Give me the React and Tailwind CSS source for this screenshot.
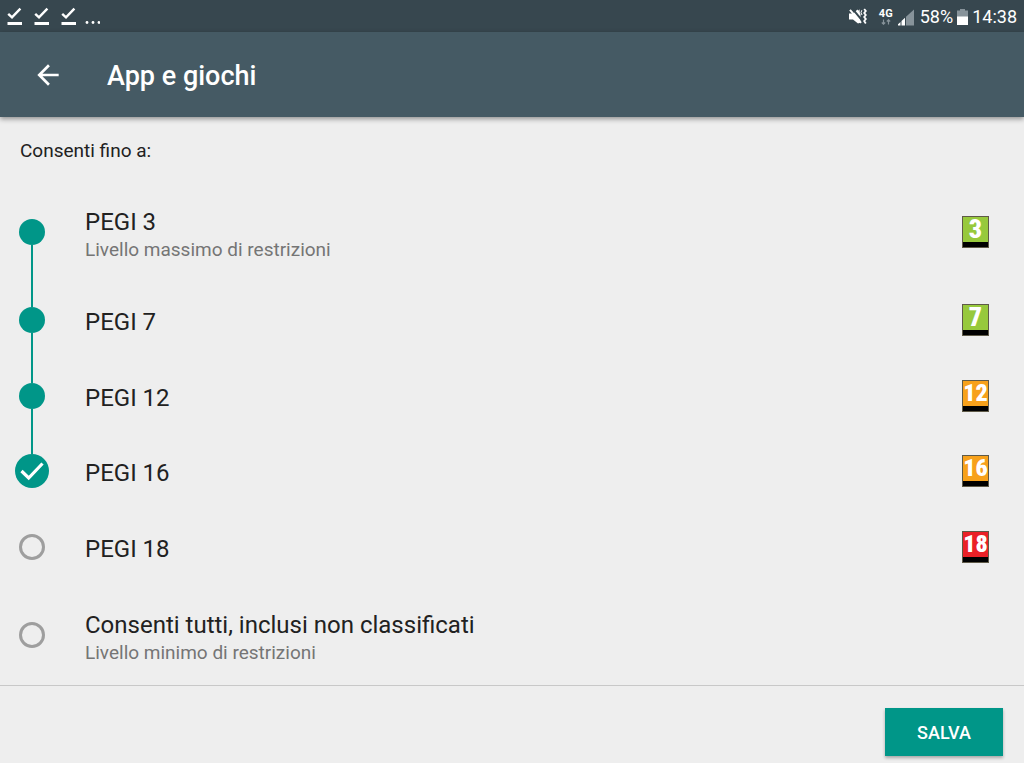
import { useState } from "react";

const LEVELS = [
  { label: "PEGI 3", note: "Livello massimo di restrizioni", badge: "3", tone: "bg-[#97c93c]" },
  { label: "PEGI 7", badge: "7", tone: "bg-[#97c93c]" },
  { label: "PEGI 12", badge: "12", tone: "bg-[#f7a11b]" },
  { label: "PEGI 16", badge: "16", tone: "bg-[#f7a11b]" },
  { label: "PEGI 18", badge: "18", tone: "bg-[#ea2127]" },
  { label: "Consenti tutti, inclusi non classificati", note: "Livello minimo di restrizioni" },
];

function DownloadDone() {
  return (
    <svg viewBox="0 0 15 18" className="h-[18px] w-[15px]" fill="none" stroke="#fff" aria-hidden="true">
      <path d="M1.2 6.8 5 10.4 13.4 1.6" strokeWidth="2.4" />
      <path d="M0.5 16.5H15" strokeWidth="3" />
    </svg>
  );
}

function MutedVibrate() {
  return (
    <svg viewBox="0 0 18 18" className="h-[18px] w-[18px]" aria-hidden="true">
      <path d="M0 5.5H4L8.5 1.5 11.5 6V14.5L9 15.5 4 11.5H0Z" fill="#fff" />
      <path d="M3.5 0.8 13.5 12.8" stroke="#37474f" strokeWidth="2" />
      <path d="M1 1.8 12 14.8" stroke="#fff" strokeWidth="2" />
      <path d="M8.5 3.4 10.6 1.2V6Z" fill="#fff" />
      <path d="M12.8 2.2 12 4.6 13 7" stroke="#fff" strokeWidth="1" fill="none" />
      <path d="M15.2 1 16.8 3 15.2 5 16.8 7 15.2 9 16.8 11 15.2 13 16.8 15.5" stroke="#fff" strokeWidth="1.8" fill="none" />
    </svg>
  );
}

function MobileData() {
  return (
    <div className="flex w-[14px] flex-col items-center">
      <span className="text-[11px] leading-[10px] font-bold">4G</span>
      <svg viewBox="0 0 10 6" className="h-[6px] w-[10px]" fill="none" stroke="#87939a" aria-hidden="true">
        <path d="M2.5 0.5V5M0.8 3.5 2.5 5.2 4.2 3.5M7.5 5.5V1M5.8 2.5 7.5 0.8 9.2 2.5" strokeWidth="1.2" />
      </svg>
    </div>
  );
}

function Signal() {
  return (
    <svg viewBox="0 0 16 17" className="h-[17px] w-[16px]" aria-hidden="true">
      <path d="M0 16.5V15.3L2.5 13V16.5ZM3.5 16.5V12L7 8.7V16.5Z" fill="#fff" />
      <path d="M8 16.5V7.8L16 0.5V16.5Z" fill="#87939a" />
    </svg>
  );
}

function Battery() {
  return (
    <svg viewBox="0 0 11 16" className="h-[16px] w-[11px]" aria-hidden="true">
      <path d="M3 0H8V1.6H11V8H0V1.6H3Z" fill="#87939a" />
      <path d="M0 7.5H11V16H0Z" fill="#fff" />
    </svg>
  );
}

function Badge({ text, tone }) {
  return (
    <div className="flex w-[27px] flex-col border border-[#5f5a48] bg-black pb-[5px]">
      <span
        className={`flex h-[25px] items-center justify-center font-['Roboto_Condensed',Roboto,sans-serif] leading-[25px] font-black text-white ${tone} ${
          text.length > 1 ? "text-[24px]" : "text-[26px]"
        }`}
      >
        {text}
      </span>
    </div>
  );
}

function LevelRow({ level, index, selected, onSelect }) {
  const passed = index < selected;
  const current = index === selected;
  const rail = "w-[2px] flex-1";
  return (
    <label className={`flex cursor-pointer items-stretch pr-[35px] pl-[15px] ${level.note ? "h-[100px] shrink-0" : "min-h-16 flex-1"}`}>
      <span className="flex w-[34px] shrink-0 flex-col items-center">
        <span className={`${rail} ${index > 0 && index <= selected ? "bg-[#009688]" : ""}`} />
        <span className="grid place-items-center">
          <input
            type="radio"
            name="level"
            checked={current}
            onChange={() => onSelect(index)}
            className={`col-start-1 row-start-1 appearance-none rounded-full ${
              current
                ? "size-[34px] bg-[#009688]"
                : passed
                  ? "size-[26px] bg-[#009688]"
                  : "size-[26px] border-[3px] border-[#9e9e9e]"
            }`}
          />
          {current && (
            <svg viewBox="0 0 34 34" className="pointer-events-none col-start-1 row-start-1 size-[34px]" aria-hidden="true">
              <path d="M6.5 17 13.7 24 27.5 9.5" fill="none" stroke="#fff" strokeWidth="3.2" />
            </svg>
          )}
        </span>
        <span className={`${rail} ${passed ? "bg-[#009688]" : ""}`} />
      </span>
      <span className="ml-9 flex flex-1 flex-col justify-center pt-1">
        <span className="text-[24px] leading-8 text-[#212121]">{level.label}</span>
        {level.note && <span className="text-[19px] leading-6 text-[#757575]">{level.note}</span>}
      </span>
      {level.badge && (
        <span className="flex items-center">
          <Badge text={level.badge} tone={level.tone} />
        </span>
      )}
    </label>
  );
}

export default function App() {
  const [selected, setSelected] = useState(3);
  return (
    <div className="flex min-h-screen flex-col bg-[#eeeeee] font-[Roboto,sans-serif]">
      <div className="flex h-8 items-center justify-between bg-[#37474f] px-[7px] text-white">
        <div className="flex items-center gap-3">
          <DownloadDone />
          <DownloadDone />
          <DownloadDone />
          <svg viewBox="0 0 16 18" className="-ml-1 h-[18px] w-4" fill="#fff" aria-hidden="true">
            <circle cx="3" cy="15.5" r="1.4" />
            <circle cx="9" cy="15.5" r="1.4" />
            <circle cx="15" cy="15.5" r="1.4" />
          </svg>
        </div>
        <div className="flex items-center gap-1 pt-[2px] text-[18px] leading-[22px]">
          <MutedVibrate />
          <span className="mr-[2px] ml-2 flex items-center gap-[5px]">
            <MobileData />
            <Signal />
          </span>
          <span>58%</span>
          <Battery />
          <span>14:38</span>
        </div>
      </div>
      <header className="flex h-[85px] items-center bg-[#455a64] px-8 text-white shadow-[0_2px_5px_rgba(0,0,0,0.4)]">
        <button type="button" aria-label="Indietro" className="cursor-pointer">
          <svg viewBox="0 0 24 24" className="size-8" fill="#fff" aria-hidden="true">
            <path d="M20 11H7.83l5.59-5.59L12 4l-8 8 8 8 1.41-1.41L7.83 13H20v-2z" />
          </svg>
        </button>
        <h1 className="ml-[43px] pt-[2px] text-[27px] leading-8 font-medium">App e giochi</h1>
      </header>
      <form className="flex flex-1 flex-col" onSubmit={(e) => e.preventDefault()}>
        <h2 id="levels-title" className="px-5 pt-[22px] pb-[19px] text-[19px] leading-6 text-[#212121]">
          Consenti fino a:
        </h2>
        <div role="radiogroup" aria-labelledby="levels-title" className="flex flex-1 flex-col">
          {LEVELS.map((level, i) => (
            <LevelRow key={level.label} level={level} index={i} selected={selected} onSelect={setSelected} />
          ))}
        </div>
        <footer className="flex h-[78px] items-start justify-end border-t border-[#c8c8c8] pt-[22px] pr-[21px]">
          <button
            type="submit"
            className="h-12 w-[118px] cursor-pointer bg-[#009688] text-[18px] font-medium text-white shadow-[0_2px_3px_rgba(0,0,0,0.3)]"
          >
            SALVA
          </button>
        </footer>
      </form>
    </div>
  );
}
